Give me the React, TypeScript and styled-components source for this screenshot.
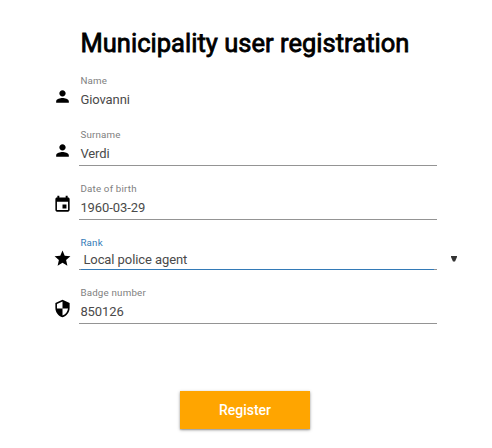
import React from "react";
import styled, { createGlobalStyle } from "styled-components";
import { MdPerson, MdStar, MdSecurity } from "react-icons/md";

const GlobalStyle = createGlobalStyle`
  body {
    margin: 0;
    background: #fff;
    font-family: Roboto, sans-serif;
  }
`;

const Page = styled.main`
  box-sizing: border-box;
  width: 492px;
  height: 448px;
  padding-top: 25px;
  overflow: hidden;
`;

const Title = styled.h1`
  margin: 0 0 0 80.5px;
  height: 37px;
  font-size: 25.5px;
  letter-spacing: 0.02px;
  line-height: 36px;
  font-weight: 400;
  -webkit-text-stroke: 0.8px #000;
  color: #000;
  white-space: nowrap;
`;

const Form = styled.form`
  display: flex;
  flex-direction: column;
  padding: 10px 0 0 53px;
`;

const Field = styled.div<{ $height: number }>`
  display: flex;
  height: ${(p) => p.$height}px;
`;

const IconSlot = styled.span`
  display: flex;
  width: 26px;
  padding-top: 15px;
  font-size: 19px;
  color: #000;
`;

const Control = styled.div<{ $line: string; $height: number; $focused?: boolean }>`
  box-sizing: border-box;
  width: 358px;
  height: ${(p) => p.$height}px;
  padding: 3px 0 0 1.4px;
  border-bottom: 1px solid ${(p) => p.$line};
  ${(p) =>
    p.$focused &&
    `border-bottom: 0;
    background: linear-gradient(to right, #949494 2px, #337ab7 2px 355px, #949494 355px) bottom / 100% 1px no-repeat;`}
`;

const Label = styled.div<{ $active?: boolean }>`
  font-size: 9.75px;
  letter-spacing: 0.2px;
  line-height: 12px;
  color: ${(p) => (p.$active ? "#337ab7" : "#808080")};
`;

const Value = styled.div<{ $select?: boolean }>`
  padding-left: ${(p) => (p.$select ? 3 : 0)}px;
  margin-top: ${(p) => (p.$select ? 2 : 4)}px;
  font-size: 13px;
  letter-spacing: -0.08px;
  line-height: 18px;
  color: #4a4a4a;
`;

const Arrow = styled.svg`
  width: 6px;
  height: 6px;
  margin: 22px 0 0 14px;
`;

const Submit = styled.button`
  width: 130px;
  height: 38px;
  margin: 50px 0 0 127px;
  padding: 0;
  border: 0;
  background: #ffa500;
  box-shadow: 0 1px 3px rgba(0, 0, 0, 0.35), 0 1px 1px rgba(0, 0, 0, 0.15);
  color: #fff;
  font: 500 14px Roboto, sans-serif;
`;

function CalendarIcon() {
  return (
    <svg viewBox="0 0 24 24" width="1em" height="1em" fill="currentColor">
      <path d="M17 12h-5v5h5v-5zM16 1v2H8V1H5.5v2H5c-1.1 0-2 .9-2 2v14c0 1.1.9 2 2 2h14c1.1 0 2-.9 2-2V5c0-1.1-.9-2-2-2h-.5V1H16zm3 18H5V8.5h14V19z" />
    </svg>
  );
}

const fields = [
  { label: "Name", value: "Giovanni", Icon: MdPerson, line: "transparent", height: 54 },
  { label: "Surname", value: "Verdi", Icon: MdPerson, line: "#949494", height: 54 },
  { label: "Date of birth", value: "1960-03-29", Icon: CalendarIcon, line: "#949494", height: 54 },
  { label: "Rank", value: "Local police agent", Icon: MdStar, line: "#949494", height: 50, select: true },
  { label: "Badge number", value: "850126", Icon: MdSecurity, line: "#949494", height: 57 },
];

export default function App() {
  return (
    <>
      <GlobalStyle />
      <Page>
        <Title>Municipality user registration</Title>
        <Form>
          {fields.map(({ label, value, Icon, line, height, select }) => (
            <Field key={label} $height={height}>
              <IconSlot><Icon /></IconSlot>
              <Control $line={line} $height={select ? 36 : 40} $focused={select}>
                <Label $active={select}>{label}</Label>
                <Value $select={select}>{value}</Value>
              </Control>
              {select && (
                <Arrow viewBox="0 0 6 6"><path d="M0 0h6v1L4 5.5H2L0 1z" fill="#333" /></Arrow>
              )}
            </Field>
          ))}
          <Submit type="button">Register</Submit>
        </Form>
      </Page>
    </>
  );
}
